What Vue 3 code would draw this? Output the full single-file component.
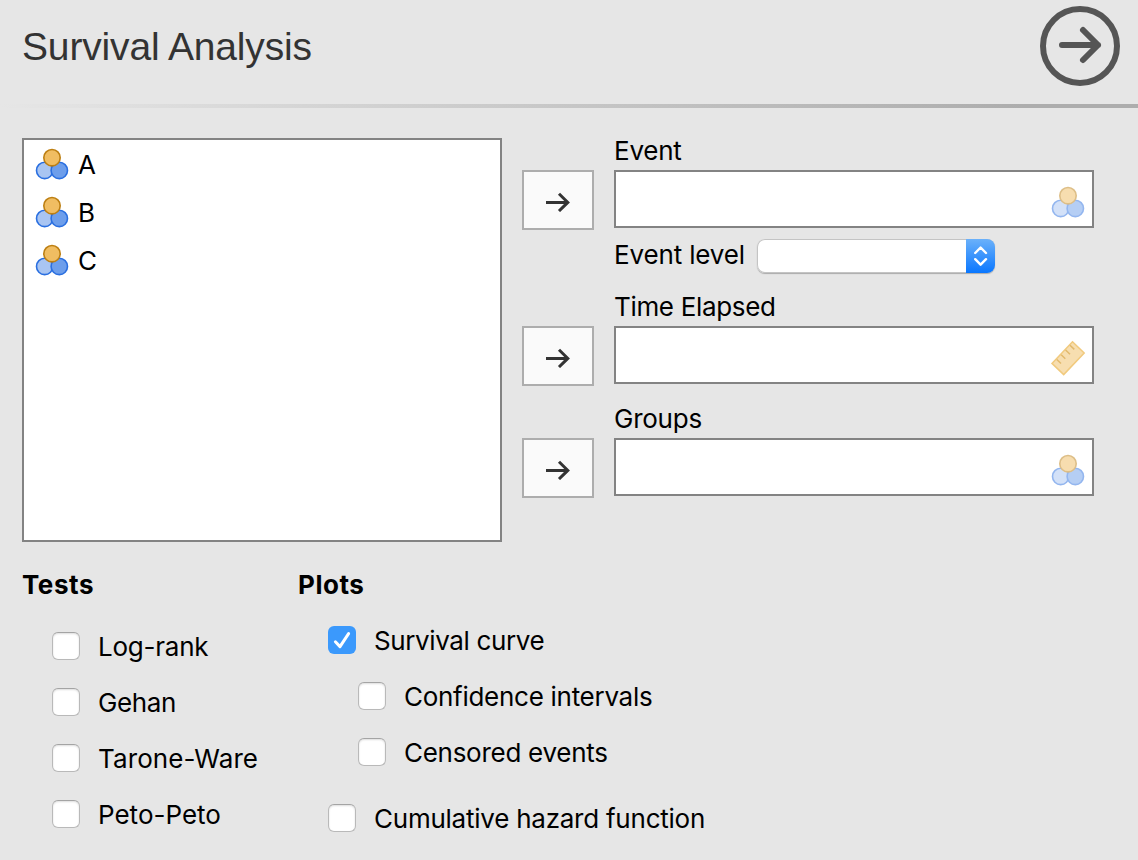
<script setup>
import { ref } from 'vue'

const variables = ['A', 'B', 'C']

const targets = [
  { label: 'Event', kind: 'nominal', level: true, cls: 'event' },
  { label: 'Time Elapsed', kind: 'continuous', cls: 'time' },
  { label: 'Groups', kind: 'nominal', cls: 'groups' },
]

const tests = ref([
  { label: 'Log-rank', checked: false },
  { label: 'Gehan', checked: false, cls: 'snug' },
  { label: 'Tarone-Ware', checked: false, cls: 'wide' },
  { label: 'Peto-Peto', checked: false, cls: 'even' },
])

const plots = ref([
  { label: 'Survival curve', checked: true, cls: 'snug' },
  { label: 'Confidence intervals', checked: false, cls: 'sub' },
  { label: 'Censored events', checked: false, cls: 'sub' },
  { label: 'Cumulative hazard function', checked: false, cls: 'spaced' },
])
</script>

<template>
  <div class="panel">
    <header class="header">
      <h1 class="title">Survival Analysis</h1>
      <svg class="go" viewBox="0 0 80 80" fill="none" stroke="#555" stroke-width="6">
        <circle cx="40" cy="40" r="37" />
        <path d="M22 39H58M43 24L58 39L43 54" stroke-linecap="round" stroke-linejoin="round" />
      </svg>
    </header>
    <div class="rule"></div>

    <main class="assign">
      <ul class="variables">
        <li v-for="v in variables" :key="v" class="variable">
          <svg class="nominal" viewBox="0 -0.4 34 32" stroke-width="1.6">
            <circle cx="9.7" cy="22" r="8.2" fill="#a9c5f2" stroke="#2a6fe0" />
            <circle cx="24.3" cy="22" r="8.2" fill="#6d9eeb" stroke="#2a6fe0" />
            <circle cx="17" cy="9.3" r="8.2" fill="#f0bd62" stroke="#bd7f12" />
          </svg>
          <span>{{ v }}</span>
        </li>
      </ul>

      <div class="targets">
        <section v-for="t in targets" :key="t.label" class="target" :class="t.cls">
          <div class="label">{{ t.label }}</div>
          <div class="row">
            <button class="move">
              <svg viewBox="0 0 24 20" fill="none" stroke="#333" stroke-width="3">
                <path d="M0 10.4H22.3M13 1.8L21.8 10.4L13 19" />
              </svg>
            </button>
            <div class="drop">
              <svg v-if="t.kind === 'nominal'" class="nominal faded" viewBox="0 -0.4 34 32" stroke-width="1.6">
                <circle cx="9.7" cy="22" r="8.2" fill="#a9c5f2" stroke="#2a6fe0" />
                <circle cx="24.3" cy="22" r="8.2" fill="#6d9eeb" stroke="#2a6fe0" />
                <circle cx="17" cy="9.3" r="8.2" fill="#f0bd62" stroke="#bd7f12" />
              </svg>
              <svg v-else class="ruler" viewBox="0 0 36 36" fill="#f7deb0" stroke="#f1ca7e" stroke-width="1.5">
                <path d="M22.5 1.8L34.2 13L13.7 34.6L2 23.4Z" />
                <path d="M20 5.2L24.3 9.4M15.6 10L20 14.3M11.2 14.8L15.3 18.8M6.8 19.5L11 23.5" stroke="#e2b96c" />
              </svg>
            </div>
          </div>
          <div v-if="t.level" class="level">
            <span class="level-label">Event level</span>
            <div class="select">
              <div class="stepper">
                <svg viewBox="0 0 14 20" fill="none" stroke="#fff" stroke-width="2.4" stroke-linecap="round" stroke-linejoin="round">
                  <path d="M1.2 7L6.6 1.5L12 7M1.2 13.2L6.6 18.7L12 13.2" />
                </svg>
              </div>
            </div>
          </div>
        </section>
      </div>
    </main>

    <div class="options">
      <section class="tests">
        <h2>Tests</h2>
        <label v-for="o in tests" :key="o.label" class="option" :class="o.cls">
          <input v-model="o.checked" type="checkbox" class="native" />
          <span class="box"></span>
          <span class="text">{{ o.label }}</span>
        </label>
      </section>
      <section class="plots">
        <h2>Plots</h2>
        <label v-for="o in plots" :key="o.label" class="option" :class="o.cls">
          <input v-model="o.checked" type="checkbox" class="native" />
          <span class="box" :class="{ on: o.checked }">
            <svg v-if="o.checked" viewBox="0 0 28 28" fill="none" stroke="#fff" stroke-width="3" stroke-linecap="round" stroke-linejoin="round">
              <path d="M7.4 15.8L12 20.6L20.6 7.6" />
            </svg>
          </span>
          <span class="text">{{ o.label }}</span>
        </label>
      </section>
    </div>
  </div>
</template>

<style>
body {
  margin: 0;
  background: #e6e6e6;
}
</style>

<style scoped>
.panel {
  box-sizing: border-box;
  width: 1138px;
  height: 860px;
  overflow: hidden;
  background: #e6e6e6;
  color: #000;
  font: 26px/32px Inter, "Liberation Sans", sans-serif;
}
.header {
  display: flex;
  justify-content: space-between;
  align-items: flex-start;
  height: 98px;
  padding: 6px 18px 0 22px;
}
.title {
  margin: 17px 0 0;
  font: 400 39px/48px "Liberation Sans", Arial, sans-serif;
  letter-spacing: -0.16px;
  color: #333;
}
.go {
  width: 80px;
  height: 80px;
}
.rule {
  height: 4px;
  background: linear-gradient(to right, #e6e6e6, #adadad 90%);
}
.assign {
  display: flex;
  gap: 20px;
  padding: 30px 44px 0 22px;
}
.variables {
  box-sizing: border-box;
  width: 480px;
  height: 404px;
  margin: 0;
  padding: 0 0 0 11px;
  list-style: none;
  background: #fff;
  border: 2px solid #838383;
}
.variable {
  display: flex;
  align-items: center;
  gap: 9px;
  height: 48px;
}
.variable span {
  padding-top: 1px;
}
.nominal {
  width: 34px;
  height: 32px;
}
.faded {
  opacity: 0.5;
}
.targets {
  display: flex;
  flex-direction: column;
}
.label {
  margin-left: 92px;
  height: 32px;
  line-height: 25px;
  letter-spacing: -0.25px;
}
.time .label {
  letter-spacing: -0.33px;
}
.row {
  display: flex;
  align-items: flex-start;
  gap: 20px;
  height: 58px;
}
.move {
  box-sizing: border-box;
  display: flex;
  align-items: center;
  justify-content: center;
  width: 72px;
  height: 60px;
  padding: 4px 0 0;
  background: #fafafa;
  border: 2px solid #adadad;
}
.move svg {
  width: 24px;
  height: 20px;
}
.drop {
  box-sizing: border-box;
  display: flex;
  align-items: center;
  justify-content: flex-end;
  width: 480px;
  height: 58px;
  padding: 5px 7px 0 0;
  background: #fff;
  border: 2px solid #838383;
}
.ruler {
  width: 36px;
  height: 36px;
  margin-right: -1px;
}
.level {
  display: flex;
  align-items: center;
  gap: 12px;
  height: 56px;
  margin-left: 92px;
  padding-bottom: 10px;
}
.level-label {
  width: 131px;
  padding-bottom: 2px;
  letter-spacing: -0.15px;
  white-space: nowrap;
}
.time {
  margin-bottom: 22px;
}
.select {
  display: flex;
  justify-content: flex-end;
  width: 238px;
  height: 34px;
  overflow: hidden;
  background: #fff;
  border-radius: 8px;
  box-shadow: inset 0 0 0 1px #c4c4c4, 0 1px 1px #aaa;
}
.stepper {
  display: flex;
  align-items: center;
  justify-content: center;
  width: 29px;
  background: linear-gradient(#6bb1fa, #0a77ff);
}
.stepper svg {
  width: 14px;
  height: 20px;
}
.options {
  display: flex;
  padding: 27px 22px 0;
}
.tests {
  width: 276px;
}
h2 {
  margin: 0;
  font-size: 26px;
  line-height: 32px;
  font-weight: 700;
  letter-spacing: 0.55px;
}
.option {
  display: flex;
  align-items: center;
  gap: 18px;
  height: 28px;
  margin: 0 0 28px 30px;
  letter-spacing: -0.24px;
  white-space: nowrap;
}
.option.snug {
  letter-spacing: -0.38px;
}
.option.wide {
  letter-spacing: 0.1px;
}
.option.even {
  letter-spacing: 0;
}
.text {
  padding-top: 2px;
}
.tests h2 {
  margin-bottom: 31px;
}
.plots h2 {
  margin-bottom: 25px;
}
.option.sub {
  margin-left: 60px;
  letter-spacing: -0.28px;
}
.option.spaced {
  margin-top: 38px;
}
.native {
  display: none;
}
.box {
  box-sizing: border-box;
  width: 28px;
  height: 28px;
  background: #fff;
  border: 1px solid #b9b9b9;
  border-top-color: #a4a4a4;
  border-radius: 6px;
  box-shadow: inset 0 1px 2px #ddd;
}
.box.on {
  background: #3b99fc;
  border: 0;
  box-shadow: none;
}
.box svg {
  display: block;
}
</style>
